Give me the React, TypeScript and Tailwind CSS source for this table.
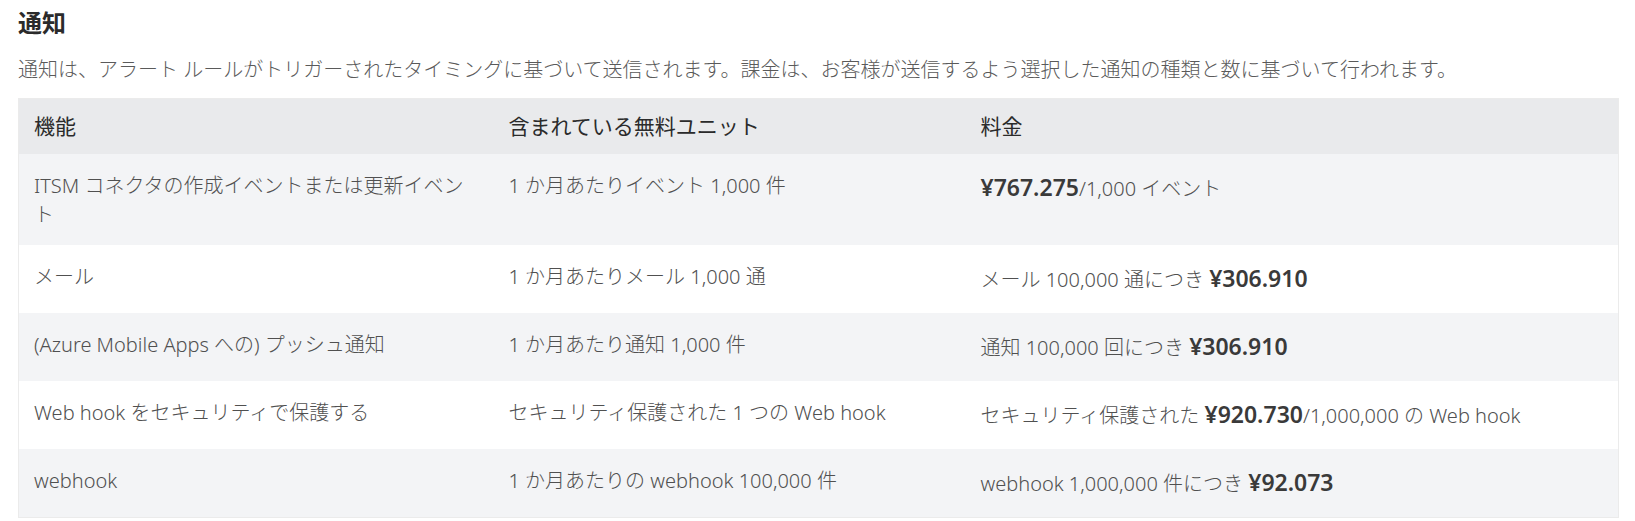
import React from "react";

const font = { fontFamily: "'Noto Sans', 'Noto Sans CJK JP', sans-serif" };

type Row = { f: React.ReactNode; u: React.ReactNode; p: React.ReactNode; striped: boolean };

const B = ({ children }: { children: React.ReactNode }) => (
  <span className="text-[23px] font-semibold text-[#3a3a3a]">{children}</span>
);

const rows: Row[] = [
  {
    f: "ITSM コネクタの作成イベントまたは更新イベント",
    u: "1 か月あたりイベント 1,000 件",
    p: (
      <>
        <B>¥767.275</B>/1,000 イベント
      </>
    ),
    striped: true,
  },
  {
    f: "メール",
    u: "1 か月あたりメール 1,000 通",
    p: (
      <>
        メール 100,000 通につき <B>¥306.910</B>
      </>
    ),
    striped: false,
  },
  {
    f: "(Azure Mobile Apps への) プッシュ通知",
    u: "1 か月あたり通知 1,000 件",
    p: (
      <>
        通知 100,000 回につき <B>¥306.910</B>
      </>
    ),
    striped: true,
  },
  {
    f: "Web hook をセキュリティで保護する",
    u: "セキュリティ保護された 1 つの Web hook",
    p: (
      <>
        セキュリティ保護された <B>¥920.730</B>/1,000,000 の Web hook
      </>
    ),
    striped: false,
  },
  {
    f: "webhook",
    u: "1 か月あたりの webhook 100,000 件",
    p: (
      <>
        webhook 1,000,000 件につき <B>¥92.073</B>
      </>
    ),
    striped: true,
  },
];

export default function App() {
  return (
    <div className="bg-white w-[1635px] h-[521px] overflow-hidden pl-[18px] pr-[16px] pt-[6px]" style={font}>
      <h2 className="text-[24px] leading-[34px] font-bold text-[#2b2b2b]">通知</h2>
      <p className="mt-[15px] text-[20px] leading-[29px] text-[#5a5a5a] font-light">
        通知は、アラート ルールがトリガーされたタイミングに基づいて送信されます。課金は、お客様が送信するよう選択した通知の種類と数に基づいて行われます。
      </p>
      <table className="mt-[14px] w-[1601px] table-fixed border-collapse border border-[#ebebeb]">
        <colgroup>
          <col className="w-[475px]" />
          <col className="w-[472px]" />
          <col />
        </colgroup>
        <thead>
          <tr className="bg-[#e9eaec]">
            <th className="text-left font-normal text-[21px] leading-[31px] text-[#2b2b2b] px-[15px] py-[12px]">機能</th>
            <th className="text-left font-normal text-[21px] leading-[31px] text-[#2b2b2b] px-[15px] py-[12px]">含まれている無料ユニット</th>
            <th className="text-left font-normal text-[21px] leading-[31px] text-[#2b2b2b] px-[15px] py-[12px]">料金</th>
          </tr>
        </thead>
        <tbody>
          {rows.map((r, i) => (
            <tr key={i} className={r.striped ? "bg-[#f3f4f6]" : "bg-white"}>
              <td className="align-top pl-[15px] pr-[22px] pt-[17px] pb-[16px] text-[20px] leading-[29px] text-[#505050] font-light">{r.f}</td>
              <td className="align-top px-[15px] pt-[17px] pb-[16px] text-[20px] leading-[29px] text-[#505050] font-light">{r.u}</td>
              <td className="align-top px-[15px] pt-[17px] pb-[17px] text-[20px] leading-[32px] text-[#505050] font-light">{r.p}</td>
            </tr>
          ))}
        </tbody>
      </table>
    </div>
  );
}
